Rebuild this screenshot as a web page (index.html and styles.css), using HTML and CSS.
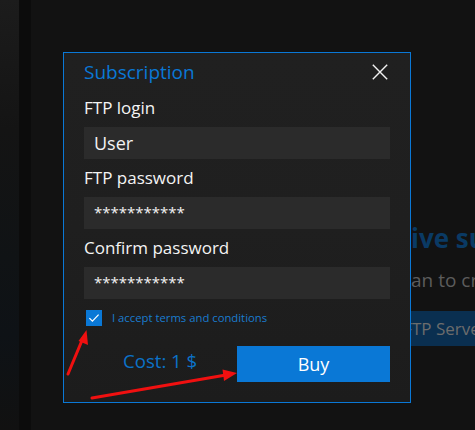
FILE: index.html
```html
<!DOCTYPE html>
<html lang="en">
<head>
<meta charset="utf-8">
<title>Subscription</title>
<link rel="stylesheet" href="styles.css">
</head>
<body>
<div class="app">
  <aside class="rail">
    <div class="rail-edge"></div>
    <div class="rail-gap"></div>
  </aside>
  <main class="main">
    <section class="hero">
      <h2 class="hero-line hero-title"><span class="pre">Exclus</span><span>ive subscription</span></h2>
      <p class="hero-line hero-text"><span class="pre">Choose a pl</span><span>an to create your own FTP server</span></p>
      <div class="hero-line hero-band"><span class="pre">Create F</span><span>TP Server</span></div>
    </section>
  </main>

  <div class="dialog">
    <div class="dialog-head">
      <h1 class="dialog-title">Subscription</h1>
      <button class="close" aria-label="Close">
        <svg width="16" height="16" viewBox="0 0 16 16"><path d="M0.8 0.8 L15.2 15.2 M15.2 0.8 L0.8 15.2" stroke="#f2f2f2" stroke-width="1.4" fill="none"/></svg>
      </button>
    </div>
    <label class="field-label">FTP login</label>
    <div class="field">User</div>
    <label class="field-label">FTP password</label>
    <div class="field pw">***********</div>
    <label class="field-label">Confirm password</label>
    <div class="field pw">***********</div>
    <div class="check-row">
      <span class="checkbox">
        <svg width="16" height="16" viewBox="0 0 16 16"><path d="M3.4 8.2 L6.4 11.2 L12.6 4.6" stroke="#fff" stroke-width="1.2" fill="none"/></svg>
      </span>
      <span class="check-label">I accept terms and conditions</span>
    </div>
    <div class="buy-row">
      <span class="cost">Cost: 1 $</span>
      <button class="buy">Buy</button>
    </div>
  </div>

  <svg class="annot" width="475" height="430" viewBox="0 0 475 430">
    <g stroke="#f01010" stroke-width="3" stroke-linecap="round" fill="none">
      <path d="M68 374 L83 338"/>
      <path d="M92 398 L226 375"/>
    </g>
    <g fill="#f01010">
      <path d="M86.5 330 L88 345 L78.5 341 Z"/>
      <path d="M237 373 L224 381 L222.5 369.5 Z"/>
    </g>
  </svg>
</div>
</body>
</html>
```
FILE: styles.css
```css
* { box-sizing: border-box; }
html, body { margin: 0; padding: 0; }
body {
  background: #111111;
  font-family: "Open Sans", "Noto Sans", sans-serif;
  overflow: hidden;
}
.app {
  position: relative;
  width: 475px;
  height: 430px;
  display: flex;
  overflow: hidden;
}
.rail {
  display: flex;
  flex: none;
  height: 100%;
}
.rail-edge {
  width: 19px;
  background: linear-gradient(180deg, #1c1c1c 0%, #141414 30%, #101315 60%, #0e1216 78%, #111 100%);
}
.rail-gap {
  width: 12px;
  background: #0c0c0c;
}
.main {
  flex: 1;
  min-width: 0;
  background: #121212;
  padding-left: 299px;
  padding-top: 221px;
}
.hero {
  display: flex;
  flex-direction: column;
  white-space: nowrap;
}
.hero-line {
  display: flex;
}
.pre {
  flex: none;
  width: 81px;
  display: flex;
  justify-content: flex-end;
}
.hero-title {
  margin: 0;
  font-size: 26px;
  line-height: 34px;
  font-weight: 700;
  color: #0a3a64;
}
.hero-text {
  margin: 12px 0 0;
  font-size: 19px;
  line-height: 26px;
  color: #5c5c5c;
}
.hero-band {
  margin-top: 18px;
  height: 35px;
  line-height: 35px;
  font-size: 17px;
  color: #6c6c6c;
  background: #0a2f50;
}
.hero-band .pre { width: 82px; }
.dialog {
  position: absolute;
  left: 63px;
  top: 52px;
  width: 348px;
  height: 351px;
  border: 1px solid #0a78d6;
  background: linear-gradient(180deg, #202020 0%, #1f1f1f 50%, #1c1c1c 100%);
  padding: 5px 20px 0 20px;
  display: flex;
  flex-direction: column;
}
.dialog-head {
  display: flex;
  align-items: center;
  justify-content: space-between;
  height: 28px;
  margin-bottom: 10px;
}
.dialog-title {
  margin: 0;
  font-size: 19px;
  line-height: 29px;
  font-weight: 400;
  color: #0a78d6;
}
.close {
  border: 0;
  padding: 0;
  background: none;
  width: 16px;
  height: 16px;
  margin-right: 2px;
  display: block;
}
.close svg { display: block; }
.field-label {
  font-size: 17px;
  line-height: 24px;
  color: #f4f4f4;
  margin-bottom: 7px;
}
.field {
  height: 32px;
  background: #2b2b2b;
  color: #f2f2f2;
  font-size: 18px;
  line-height: 32px;
  padding-left: 10px;
  margin-bottom: 7px;
}
.field.pw {
  font-size: 15px;
  line-height: 30px;
}
.check-row {
  display: flex;
  align-items: center;
  margin-top: 4px;
  padding-left: 2px;
}
.checkbox {
  width: 16px;
  height: 16px;
  background: #0a78d6;
  display: block;
  flex: none;
}
.checkbox svg { display: block; }
.check-label {
  margin-left: 10px;
  font-size: 11.3px;
  color: #1a7ccf;
  line-height: 16px;
}
.buy-row {
  display: flex;
  align-items: flex-start;
  margin-top: 20px;
}
.cost {
  margin-left: 39px;
  font-size: 18.6px;
  line-height: 28px;
  margin-top: 1px;
  color: #0b72c8;
}
.buy {
  margin-left: auto;
  width: 153px;
  height: 36px;
  border: 0;
  background: #0a78d6;
  color: #ffffff;
  font-family: "Open Sans", "Noto Sans", sans-serif;
  font-size: 18px;
  padding: 0;
  line-height: 36px;
}
.annot {
  position: absolute;
  left: 0;
  top: 0;
  pointer-events: none;
}
```
